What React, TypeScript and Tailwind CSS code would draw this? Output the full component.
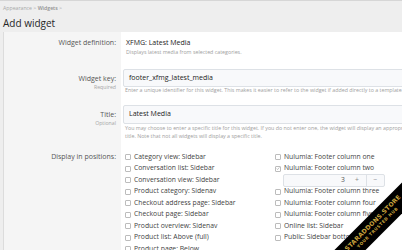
const leftPositions = [
  "Category view: Sidebar",
  "Conversation list: Sidebar",
  "Conversation view: Sidebar",
  "Product category: Sidenav",
  "Checkout address page: Sidebar",
  "Checkout page: Sidebar",
  "Product overview: Sidenav",
  "Product list: Above (full)",
  "Product page: Below",
]

const Check = ({ label, checked }: { label: string; checked?: boolean }) => (
  <div className="h-[11.5px] flex items-center gap-[2px] whitespace-nowrap">
    <span className="w-[6px] h-[6px] border border-[#bcbcbc] rounded-[1px] bg-white flex items-center justify-center shrink-0">
      {checked && (
        <svg viewBox="0 0 8 8" className="w-[5px] h-[5px]">
          <path d="M1.2 4.2 L3.2 6 L6.8 1.8" fill="none" stroke="#9a9a9a" strokeWidth="1.2" />
        </svg>
      )}
    </span>
    <span className="ml-[1px]">{label}</span>
  </div>
)

const Hint = ({ text, hint }: { text: string; hint?: string }) => (
  <div className="text-right pr-[5px]">
    <div className="text-[7px] leading-[10px] text-[#555]">{text}</div>
    {hint && <div className="text-[5.2px] leading-[7px] text-[#a5a5a5]">{hint}</div>}
  </div>
)

export default function App() {
  return (
    <div className="relative w-[402px] h-[250px] overflow-hidden bg-[#eeeeee] font-['Open_Sans',sans-serif] text-[#333]">
      <div className="h-[32px] border-t border-[#d6d6d6] px-[3px] pt-[3px]">
        <div className="text-[5.2px] leading-[8px] text-[#a8a8a8]">
          Appearance &gt; <span className="font-semibold text-[#909090]">Widgets</span> &gt;
        </div>
        <h1 className="text-[10px] leading-[16px] text-[#262626] mt-[3px]">Add widget</h1>
      </div>

      <div className="ml-[3px] border-l border-[#dcdcdc] bg-white">
        {/* definition */}
        <div className="flex">
          <div className="w-[117px] shrink-0 bg-[#f5f5f5] pt-[6px] pb-[8px]">
            <Hint text="Widget definition:" />
          </div>
          <div className="pl-[5px] pt-[6px] pb-[8px]">
            <div className="text-[7px] leading-[10px] text-[#222]">XFMG: Latest Media</div>
            <div className="text-[5.3px] leading-[8px] text-[#9e9e9e]">Displays latest media from selected categories.</div>
          </div>
        </div>

        {/* key */}
        <div className="flex">
          <div className="w-[117px] shrink-0 bg-[#f5f5f5] pt-[9.5px]">
            <Hint text="Widget key:" hint="Required" />
          </div>
          <div className="flex-1 pl-[2px] pt-[5px] pb-[4px]">
            <div className="h-[18px] w-[300px] border border-[#dde1e6] rounded-[2px] bg-[#f8f9fb] flex items-center pl-[5px] text-[7px] text-[#222]">
              footer_xfmg_latest_media
            </div>
            <div className="pl-[2px] text-[5.3px] leading-[7px] text-[#9e9e9e] whitespace-nowrap">
              Enter a unique identifier for this widget. This makes it easier to refer to the widget if added directly to a template.
            </div>
          </div>
        </div>

        {/* title */}
        <div className="flex">
          <div className="w-[117px] shrink-0 bg-[#f5f5f5] pt-[12px]">
            <Hint text="Title:" hint="Optional" />
          </div>
          <div className="flex-1 pl-[2px] pt-[7px]">
            <div className="h-[19px] w-[300px] border border-[#dde1e6] rounded-[2px] bg-[#f8f9fb] flex items-center pl-[5px] text-[7px] text-[#222]">
              Latest Media
            </div>
            <div className="pl-[2px] text-[5.3px] leading-[8px] text-[#9e9e9e] whitespace-nowrap">
              <div>You may choose to enter a specific title for this widget. If you do not enter one, the widget will display an appropriate</div>
              <div>title. Note that not all widgets will display a specific title.</div>
            </div>
          </div>
        </div>

        {/* positions */}
        <div className="flex">
          <div className="w-[117px] shrink-0 bg-[#f5f5f5] pt-[11.5px] h-[120px]">
            <Hint text="Display in positions:" />
          </div>
          <div className="pl-[4px] pt-[11.25px] grid grid-cols-[150px_150px] text-[6.8px] text-[#3f3f3f]">
            <div>
              {leftPositions.map((p) => (
                <Check key={p} label={p} />
              ))}
            </div>
            <div>
              <Check label="Nulumia: Footer column one" />
              <Check label="Nulumia: Footer column two" checked />
              <div className="h-[11.5px] flex items-center pl-[8px]">
                <div className="h-[13px] w-[102px] border border-[#dde1e6] rounded-[2px] bg-[#f8f9fb] flex text-[#555]">
                  <div className="flex-1 flex items-center justify-end pr-[3px]">3</div>
                  <div className="w-[18px] flex items-center justify-center text-[#8a8a8a]">+</div>
                  <div className="w-[18px] border-l border-[#dde1e6] flex items-center justify-center text-[#8a8a8a]">−</div>
                </div>
              </div>
              <Check label="Nulumia: Footer column three" />
              <Check label="Nulumia: Footer column four" />
              <Check label="Nulumia: Footer column five" />
              <Check label="Online list: Sidebar" />
              <Check label="Public: Sidebar bottom" />
            </div>
          </div>
        </div>
      </div>

      <div className="absolute left-[300px] top-[214px] w-[150px] h-[22px] bg-black -rotate-45 flex flex-col items-center justify-center leading-none text-[#c9a33c] font-['DejaVu_Sans',sans-serif]">
        <span className="text-[6.2px] font-bold tracking-[0.2px]">STARADDONS.STORE</span>
        <span className="text-[4.2px] font-bold tracking-[0.5px] mt-[2px]">YOUR TRUSTED HUB</span>
      </div>
    </div>
  )
}
